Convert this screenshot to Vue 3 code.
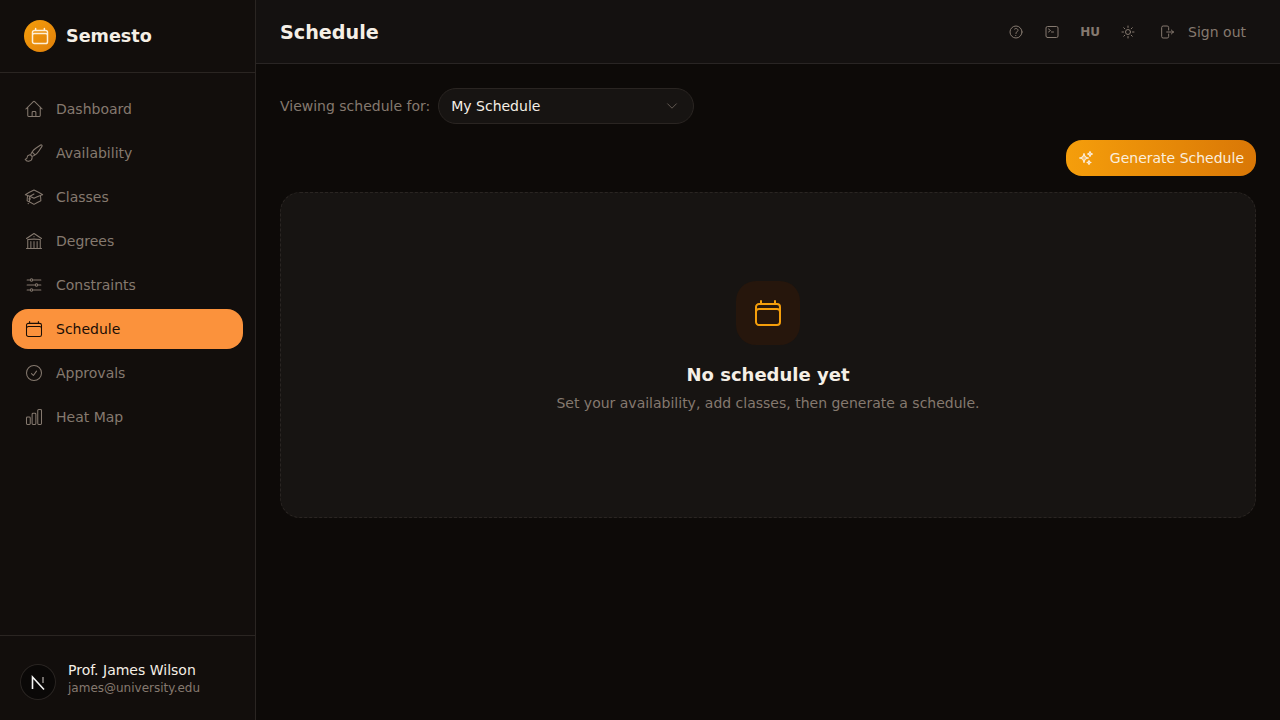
<template>
  <div class="app-shell">
    <aside class="sidebar">
      <div class="brand">
        <div class="brand-logo">
          <svg class="icon-logo" viewBox="0 0 24 24" fill="none" stroke="currentColor" stroke-width="1.8" stroke-linecap="round" stroke-linejoin="round"><path :d="icons.calendar" /></svg>
        </div>
        <span class="brand-name">Semesto</span>
      </div>

      <nav class="nav">
        <a
          v-for="item in navItems"
          :key="item.label"
          class="nav-item"
          :class="{ active: item.label === 'Schedule' }"
        >
          <svg class="nav-icon" viewBox="0 0 24 24" fill="none" stroke="currentColor" stroke-width="1.25" stroke-linecap="round" stroke-linejoin="round"><path :d="item.icon" /></svg>
          <span>{{ item.label }}</span>
        </a>
      </nav>

      <div class="user">
        <div class="avatar">
          <svg viewBox="0 0 36 36" width="36" height="36" fill="none">
            <path d="M12.5 25V13L24 25.5" stroke="#f5f5f4" stroke-width="1.6" />
            <path d="M23 13V19" stroke="#a8a29e" stroke-width="1.3" />
          </svg>
        </div>
        <div class="user-text">
          <div class="user-name">Prof. James Wilson</div>
          <div class="user-mail">james@university.edu</div>
        </div>
      </div>
    </aside>

    <div class="main">
      <header class="topbar">
        <h1 class="page-title">Schedule</h1>
        <div class="top-actions">
          <svg class="top-icon" viewBox="0 0 24 24" fill="none" stroke="currentColor" stroke-width="1.5" stroke-linecap="round" stroke-linejoin="round"><path :d="icons.question" /></svg>
          <svg class="top-icon" viewBox="0 0 24 24" fill="none" stroke="currentColor" stroke-width="1.5" stroke-linecap="round" stroke-linejoin="round"><path :d="icons.terminal" /></svg>
          <span class="lang">HU</span>
          <svg class="top-icon" viewBox="0 0 24 24" fill="none" stroke="currentColor" stroke-width="1.5" stroke-linecap="round" stroke-linejoin="round"><path :d="icons.sun" /></svg>
          <div class="sign-out">
            <svg class="top-icon" viewBox="0 0 24 24" fill="none" stroke="currentColor" stroke-width="1.5" stroke-linecap="round" stroke-linejoin="round"><path :d="icons.signOut" /></svg>
            <span>Sign out</span>
          </div>
        </div>
      </header>

      <main class="content">
        <div class="viewing">
          <span class="viewing-label">Viewing schedule for:</span>
          <div class="select">
            <span>My Schedule</span>
            <svg class="chevron" viewBox="0 0 24 24" fill="none" stroke="currentColor" stroke-width="1.5" stroke-linecap="round" stroke-linejoin="round"><path d="m19.5 8.25-7.5 7.5-7.5-7.5" /></svg>
          </div>
        </div>

        <div class="actions">
          <button class="generate">
            <svg class="spark" viewBox="0 0 24 24" fill="currentColor" fill-opacity="0.45" stroke="currentColor" stroke-width="1.7" stroke-linecap="round" stroke-linejoin="round"><path :d="icons.sparkles" /></svg>
            <span>Generate Schedule</span>
          </button>
        </div>

        <section class="empty">
          <div class="empty-icon">
            <svg viewBox="0 0 24 24" width="32" height="32" fill="none" stroke="currentColor" stroke-width="1.5" stroke-linecap="round" stroke-linejoin="round"><path :d="icons.calendar" /></svg>
          </div>
          <h2 class="empty-title">No schedule yet</h2>
          <p class="empty-text">Set your availability, add classes, then generate a schedule.</p>
        </section>
      </main>
    </div>
  </div>
</template>

<script setup>
const icons = {
  home: 'm2.25 12 8.954-8.955c.44-.439 1.152-.439 1.591 0L21.75 12M4.5 9.75v10.125c0 .621.504 1.125 1.125 1.125H9.75v-4.875c0-.621.504-1.125 1.125-1.125h2.25c.621 0 1.125.504 1.125 1.125V21h4.125c.621 0 1.125-.504 1.125-1.125V9.75M8.25 21h8.25',
  brush: 'M9.53 16.122a3 3 0 0 0-5.78 1.128 2.25 2.25 0 0 1-2.4 2.245 4.5 4.5 0 0 0 8.4-2.245c0-.399-.078-.78-.22-1.128Zm0 0a15.998 15.998 0 0 0 3.388-1.62m-5.043-.025a15.994 15.994 0 0 1 1.622-3.395m3.42 3.42a15.995 15.995 0 0 0 4.764-4.648l3.876-5.814a1.151 1.151 0 0 0-1.597-1.597L14.146 6.32a15.996 15.996 0 0 0-4.649 4.763m3.42 3.42a6.776 6.776 0 0 0-3.42-3.42',
  cap: 'M4.26 10.147a60.438 60.438 0 0 0-.491 6.347A48.62 48.62 0 0 1 12 20.904a48.62 48.62 0 0 1 8.232-4.41 60.46 60.46 0 0 0-.491-6.347m-15.482 0a50.636 50.636 0 0 0-2.658-.813A59.906 59.906 0 0 1 12 3.493a59.903 59.903 0 0 1 10.399 5.84c-.896.248-1.783.52-2.658.814m-15.482 0A50.717 50.717 0 0 1 12 13.489a50.702 50.702 0 0 1 7.74-3.342M6.75 15a.75.75 0 1 0 0-1.5.75.75 0 0 0 0 1.5Zm0 0v-3.675A55.378 55.378 0 0 1 12 8.443m-7.007 11.55A5.981 5.981 0 0 0 6.75 15.75v-1.5',
  library: 'M12 21v-8.25M15.75 21v-8.25M8.25 21v-8.25M3 9l9-6 9 6m-1.5 12V10.332A48.36 48.36 0 0 0 12 9.75c-2.551 0-5.056.2-7.5.582V21M3 21h18M12 6.75h.008v.008H12V6.75Z',
  sliders: 'M10.5 6h9.75M10.5 6a1.5 1.5 0 1 1-3 0m3 0a1.5 1.5 0 1 0-3 0M3.75 6H7.5m3 12h9.75m-9.75 0a1.5 1.5 0 0 1-3 0m3 0a1.5 1.5 0 0 0-3 0m-3.75 0H7.5m9-6h3.75m-3.75 0a1.5 1.5 0 0 1-3 0m3 0a1.5 1.5 0 0 0-3 0m-9.75 0h9.75',
  calendar: 'M6.75 3v2.25M17.25 3v2.25M3 18.75V7.5a2.25 2.25 0 0 1 2.25-2.25h13.5A2.25 2.25 0 0 1 21 7.5v11.25m-18 0A2.25 2.25 0 0 0 5.25 21h13.5A2.25 2.25 0 0 0 21 18.75m-18 0v-7.5A2.25 2.25 0 0 1 5.25 9h13.5A2.25 2.25 0 0 1 21 11.25v7.5',
  check: 'M9 12.75 11.25 15 15 9.75M21 12a9 9 0 1 1-18 0 9 9 0 0 1 18 0Z',
  chart: 'M3 13.125C3 12.504 3.504 12 4.125 12h2.25c.621 0 1.125.504 1.125 1.125v6.75C7.5 20.496 6.996 21 6.375 21h-2.25A1.125 1.125 0 0 1 3 19.875v-6.75ZM9.75 8.625c0-.621.504-1.125 1.125-1.125h2.25c.621 0 1.125.504 1.125 1.125v11.25c0 .621-.504 1.125-1.125 1.125h-2.25a1.125 1.125 0 0 1-1.125-1.125V8.625ZM16.5 4.125c0-.621.504-1.125 1.125-1.125h2.25C20.496 3 21 3.504 21 4.125v15.75c0 .621-.504 1.125-1.125 1.125h-2.25a1.125 1.125 0 0 1-1.125-1.125V4.125Z',
  question: 'M9.879 7.519c1.171-1.025 3.071-1.025 4.242 0 1.172 1.025 1.172 2.687 0 3.712-.203.179-.43.326-.67.442-.745.361-1.45.999-1.45 1.827v.75M21 12a9 9 0 1 1-18 0 9 9 0 0 1 18 0Zm-9 5.25h.008v.008H12v-.008Z',
  terminal: 'm6.75 7.5 3 2.25-3 2.25m4.5 0h3m-9 8.25h13.5A2.25 2.25 0 0 0 21 18V6a2.25 2.25 0 0 0-2.25-2.25H5.25A2.25 2.25 0 0 0 3 6v12a2.25 2.25 0 0 0 2.25 2.25Z',
  sun: 'M12 3v2.25m6.364.386-1.591 1.591M21 12h-2.25m-.386 6.364-1.591-1.591M12 18.75V21m-4.773-4.227-1.591 1.591M5.25 12H3m4.227-4.773L5.636 5.636M15.75 12a3.75 3.75 0 1 1-7.5 0 3.75 3.75 0 0 1 7.5 0Z',
  signOut: 'M13 9V5.25A2.25 2.25 0 0 0 10.75 3h-6A2.25 2.25 0 0 0 2.5 5.25v13.5A2.25 2.25 0 0 0 4.75 21h6a2.25 2.25 0 0 0 2.25-2.25V15m4 0 3-3m0 0-3-3m3 3H10',
  sparkles: 'M9.813 15.904 9 18.75l-.813-2.846a4.5 4.5 0 0 0-3.09-3.09L2.25 12l2.846-.813a4.5 4.5 0 0 0 3.09-3.09L9 5.25l.813 2.846a4.5 4.5 0 0 0 3.09 3.09L15.75 12l-2.846.813a4.5 4.5 0 0 0-3.09 3.09ZM18.259 8.715 18 9.75l-.259-1.035a3.375 3.375 0 0 0-2.455-2.456L14.25 6l1.036-.259a3.375 3.375 0 0 0 2.455-2.456L18 2.25l.259 1.035a3.375 3.375 0 0 0 2.456 2.456L21.75 6l-1.035.259a3.375 3.375 0 0 0-2.456 2.456ZM16.894 20.567 16.5 21.75l-.394-1.183a2.25 2.25 0 0 0-1.423-1.423L13.5 18.75l1.183-.394a2.25 2.25 0 0 0 1.423-1.423l.394-1.183.394 1.183a2.25 2.25 0 0 0 1.423 1.423l1.183.394-1.183.394a2.25 2.25 0 0 0-1.423 1.423Z'
}

const navItems = [
  { label: 'Dashboard', icon: icons.home },
  { label: 'Availability', icon: icons.brush },
  { label: 'Classes', icon: icons.cap },
  { label: 'Degrees', icon: icons.library },
  { label: 'Constraints', icon: icons.sliders },
  { label: 'Schedule', icon: icons.calendar },
  { label: 'Approvals', icon: icons.check },
  { label: 'Heat Map', icon: icons.chart }
]
</script>

<style>
html, body {
  margin: 0;
  background: #0d0a08;
}
</style>

<style scoped>
.app-shell {
  display: flex;
  height: 720px;
  overflow: hidden;
  background: #0d0a08;
  color: #f5efe6;
  font-family: "DejaVu Sans", sans-serif;
  font-size: 14px;
}

.sidebar {
  width: 255px;
  flex-shrink: 0;
  display: flex;
  flex-direction: column;
  background: #120e0c;
  border-right: 1px solid #2a2522;
}

.brand {
  height: 72px;
  display: flex;
  align-items: center;
  gap: 10px;
  padding-left: 24px;
  border-bottom: 1px solid #2a2522;
}

.brand-logo {
  width: 32px;
  height: 32px;
  border-radius: 50%;
  display: flex;
  align-items: center;
  justify-content: center;
  color: #fdeed6;
  background: linear-gradient(135deg, #f59e0b, #e07f0a);
}

.icon-logo {
  width: 20px;
  height: 20px;
}

.brand-name {
  font-size: 17.6px;
  line-height: 22px;
  font-weight: 700;
  color: #f5efe6;
}

.nav {
  flex: 1;
  display: flex;
  flex-direction: column;
  gap: 4px;
  padding: 16px 12px;
}

.nav-item {
  height: 40px;
  display: flex;
  align-items: center;
  gap: 12px;
  padding-left: 12px;
  border-radius: 16px;
  color: #85796f;
}

.nav-item.active {
  background: #fb923c;
  color: #1a0e06;
}

.nav-icon {
  width: 20px;
  height: 20px;
  flex-shrink: 0;
}

.user {
  height: 84px;
  display: flex;
  align-items: center;
  gap: 12px;
  padding-left: 20px;
  border-top: 1px solid #2a2522;
}

.avatar {
  width: 36px;
  height: 36px;
  margin-top: 8px;
  border-radius: 50%;
  background: #0a0807;
  box-shadow: inset 0 0 0 1px #2a2522;
}

.user-text {
  padding-top: 2px;
}

.user-name {
  font-size: 14px;
  line-height: 18px;
  color: #f5efe6;
}

.user-mail {
  font-size: 12px;
  line-height: 18px;
  color: #85796f;
}

.main {
  flex: 1;
  min-width: 0;
  display: flex;
  flex-direction: column;
}

.topbar {
  height: 63px;
  display: flex;
  align-items: center;
  justify-content: space-between;
  padding: 0 34px 0 24px;
  background: #141110;
  border-bottom: 1px solid #292524;
}

.page-title {
  margin: 2px 0 0;
  font-size: 19.2px;
  font-weight: 700;
  color: #f5efe6;
}

.top-actions {
  display: flex;
  align-items: center;
  color: #85796f;
}

.top-icon {
  width: 16px;
  height: 16px;
  flex-shrink: 0;
}

.top-actions > .top-icon:nth-child(2) {
  margin-left: 20px;
}

.lang {
  margin-left: 20px;
  font-size: 12px;
  font-weight: 700;
}

.top-actions > .top-icon:nth-child(4) {
  margin-left: 20px;
}

.sign-out {
  display: flex;
  align-items: center;
  gap: 12px;
  margin-left: 24px;
}

.content {
  flex: 1;
  display: flex;
  flex-direction: column;
  padding: 24px;
}

.viewing {
  display: flex;
  align-items: center;
  gap: 8px;
}

.viewing-label {
  color: #85796f;
}

.select {
  width: 256px;
  height: 36px;
  box-sizing: border-box;
  display: flex;
  align-items: center;
  justify-content: space-between;
  padding: 0 14px 0 12px;
  background: #171412;
  border: 1px solid #2a2522;
  border-radius: 18px;
  color: #f5efe6;
}

.chevron {
  width: 14px;
  height: 14px;
  color: #6b625a;
}

.actions {
  display: flex;
  justify-content: flex-end;
  margin-top: 16px;
}

.generate {
  height: 36px;
  display: flex;
  align-items: center;
  gap: 16px;
  padding: 0 12px;
  border: 0;
  border-radius: 16px;
  background: linear-gradient(90deg, #f59e0b, #d97706);
  color: #fbeedd;
  font-family: inherit;
  font-size: 14px;
}

.spark {
  width: 16px;
  height: 16px;
}

.empty {
  box-sizing: border-box;
  height: 326px;
  margin-top: 16px;
  display: flex;
  flex-direction: column;
  align-items: center;
  padding-top: 88px;
  background: #171412;
  border: 1px dashed #2a2522;
  border-radius: 20px;
}

.empty-icon {
  width: 64px;
  height: 64px;
  display: flex;
  align-items: center;
  justify-content: center;
  border-radius: 20px;
  background: #26160c;
  color: #f59e0b;
}

.empty-title {
  margin: 18px 0 0;
  font-size: 18px;
  line-height: 24px;
  font-weight: 700;
  color: #f5efe6;
}

.empty-text {
  margin: 6px 0 0;
  line-height: 20px;
  color: #85796f;
}
</style>
